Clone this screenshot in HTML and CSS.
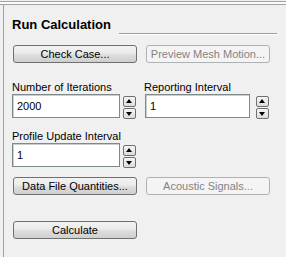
FILE: index.html
```html
<!DOCTYPE html>
<html>
<head>
<meta charset="utf-8">
<link rel="stylesheet" href="styles.css">
</head>
<body>
<div class="topbar"></div>
<div class="frame">
  <div class="header">
    <h1 class="title">Run Calculation</h1>
    <span class="rule"></span>
  </div>
  <div class="btn-row first">
    <button class="btn">Check Case...</button>
    <button class="btn disabled">Preview Mesh Motion...</button>
  </div>
  <div class="fields">
    <div class="field">
      <label class="label">Number of Iterations</label>
      <div class="input-row">
        <div class="input">2000</div>
        <div class="spin"><span class="spin-btn up"></span><span class="spin-btn down"></span></div>
      </div>
    </div>
    <div class="field right">
      <label class="label">Reporting Interval</label>
      <div class="input-row">
        <div class="input narrow">1</div>
        <div class="spin wide-gap"><span class="spin-btn up"></span><span class="spin-btn down"></span></div>
      </div>
    </div>
    <div class="field second">
      <label class="label">Profile Update Interval</label>
      <div class="input-row">
        <div class="input">1</div>
        <div class="spin"><span class="spin-btn up"></span><span class="spin-btn down"></span></div>
      </div>
    </div>
  </div>
  <div class="btn-row data">
    <button class="btn">Data File Quantities...</button>
    <button class="btn disabled">Acoustic Signals...</button>
  </div>
  <div class="btn-row calc">
    <button class="btn">Calculate</button>
  </div>
</div>
</body>
</html>
```

FILE: styles.css
```css
html, body {
  margin: 0;
  padding: 0;
  background: #f0f0f0;
  width: 286px;
  height: 257px;
  overflow: hidden;
  font-family: "Liberation Sans", Arial, sans-serif;
  font-size: 11px;
  color: #000;
}

.topbar {
  margin-top: 1px;
  height: 2px;
  border-top: 1px solid #a3a3a3;
  border-bottom: 1px solid #a3a3a3;
  background: #fbfbfb;
}

.frame {
  margin-left: 3px;
  border-left: 1px solid #a0a0a0;
  height: 252px;
  padding-left: 8px;
  padding-right: 9px;
  box-sizing: border-box;
}

.header {
  display: flex;
  height: 18px;
  margin-top: 0;
  padding-top: 12px;
}

.title {
  margin: 0;
  font-size: 13px;
  font-weight: bold;
  line-height: 15px;
  white-space: nowrap;
}

.rule {
  flex: 1;
  align-self: flex-end;
  height: 1px;
  margin-left: 8px;
  margin-bottom: 1px;
  background: #a0a0a0;
  box-shadow: 0 1px 0 #ffffff;
}

.btn-row {
  display: flex;
  gap: 9px;
  padding-left: 1px;
}

.btn-row.first { margin-top: 10px; }
.btn-row.data { margin-top: 9px; }
.btn-row.calc { margin-top: 26px; }

.btn {
  width: 124px;
  height: 18px;
  margin: 0;
  padding: 0;
  box-sizing: border-box;
  border: 1px solid #707070;
  border-radius: 3px;
  background: linear-gradient(#f2f2f2 0%, #ebebeb 45%, #dddddd 55%, #cfcfcf 100%);
  font-family: "Liberation Sans", Arial, sans-serif;
  font-size: 11px;
  line-height: 16px;
  color: #000;
  text-align: center;
}

.btn.disabled {
  border-color: #adb2b5;
  background: #f4f4f4;
  color: #838383;
}

.fields {
  display: grid;
  grid-template-columns: 132px 1fr;
  row-gap: 11px;
  margin-top: 18px;
}

.field.second {
  grid-column: 1;
}

.label {
  display: block;
  line-height: 13px;
  white-space: nowrap;
}

.input-row {
  display: flex;
  align-items: flex-start;
}

.input {
  width: 108px;
  height: 24px;
  box-sizing: border-box;
  border: 1px solid #7f8a8a;
  box-shadow: inset 1px 1px 0 #c9cece;
  background: #ffffff;
  padding-left: 4px;
  line-height: 22px;
}

.field.right .input-row {
  padding-left: 1px;
}

.input.narrow {
  width: 105px;
}

.spin {
  display: flex;
  flex-direction: column;
  gap: 1px;
  margin-left: 3px;
  margin-top: 2px;
}

.spin.wide-gap {
  margin-left: 6px;
}

.spin-btn {
  position: relative;
  width: 13px;
  height: 11px;
  box-sizing: border-box;
  border: 1px solid #707070;
  border-radius: 2px;
  background: linear-gradient(#f6f6f6, #dcdcdc);
}

.spin-btn::after {
  content: "";
  position: absolute;
  left: 2px;
  width: 0;
  height: 0;
  border-left: 3.5px solid transparent;
  border-right: 3.5px solid transparent;
}

.spin-btn.up::after {
  top: 2px;
  border-bottom: 4px solid #000;
}

.spin-btn.down::after {
  top: 3px;
  border-top: 4px solid #000;
}
```
